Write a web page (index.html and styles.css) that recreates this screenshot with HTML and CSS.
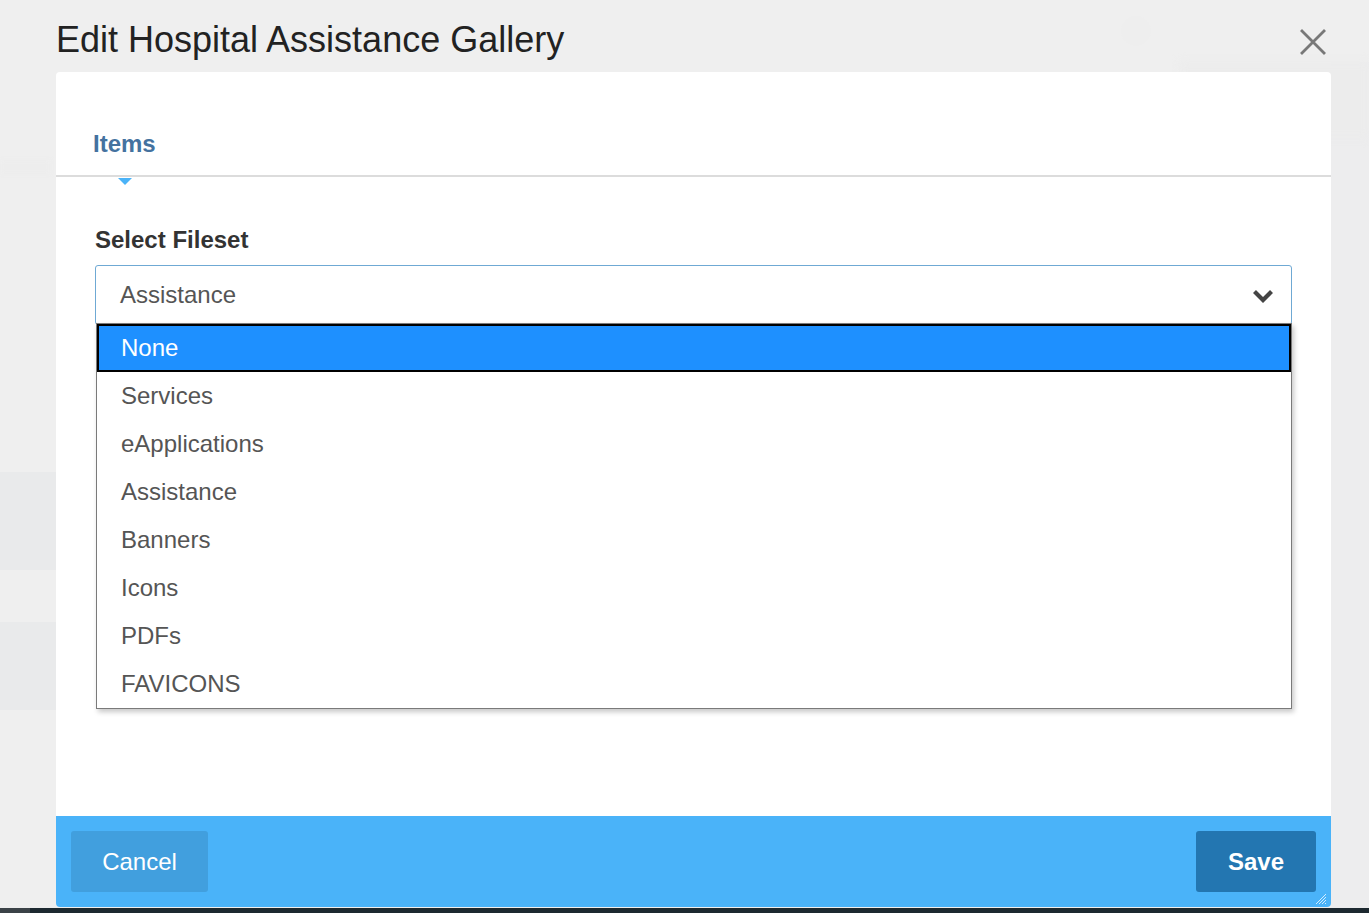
FILE: index.html
```html
<!DOCTYPE html>
<html lang="en">
<head>
<meta charset="utf-8">
<title>Edit Hospital Assistance Gallery</title>
<link rel="stylesheet" href="styles.css">
</head>
<body>
<div class="backdrop" aria-hidden="true">
  <div class="bd bd-right"></div>
  <div class="bd bd-right-top"></div>
  <div class="bd bd-left-1"></div>
  <div class="bd bd-left-2"></div>
  <div class="bd bd-left-3"></div>
  <div class="bd bd-circle"></div>
</div>
<div class="page">
  <header class="modal-head">
    <h1 class="modal-title">Edit Hospital Assistance Gallery</h1>
    <button class="close" aria-label="Close">
      <svg width="26" height="26" viewBox="0 0 26 26"><path d="M2 2 L24 24 M24 2 L2 24" stroke="#787878" stroke-width="2.8" fill="none" stroke-linecap="square"/></svg>
    </button>
  </header>
  <div class="dialog">
    <nav class="tabs">
      <span class="tab active">Items</span>
    </nav>
    <div class="dialog-body">
      <label class="field-label">Select Fileset</label>
      <div class="select-wrap">
        <div class="select">
          <span class="select-value">Assistance</span>
          <svg class="chevron" width="22" height="15" viewBox="0 0 22 15"><path d="M2.5 2.5 L11 11 L19.5 2.5" stroke="#444" stroke-width="4.2" fill="none"/></svg>
        </div>
        <ul class="options">
          <li class="option selected">None</li>
          <li class="option">Services</li>
          <li class="option">eApplications</li>
          <li class="option">Assistance</li>
          <li class="option">Banners</li>
          <li class="option">Icons</li>
          <li class="option">PDFs</li>
          <li class="option">FAVICONS</li>
        </ul>
      </div>
    </div>
    <footer class="dialog-foot">
      <button class="btn btn-cancel">Cancel</button>
      <button class="btn btn-save">Save</button>
      <svg class="grip" width="12" height="12" viewBox="0 0 12 12"><path d="M11 1 L1 11 M11 4 L4 11 M11 7 L7 11 M11 10 L10 11" stroke="rgba(255,255,255,0.75)" stroke-width="1" fill="none"/></svg>
    </footer>
  </div>
</div>
<div class="taskbar"><span class="taskbar-start"></span></div>
</body>
</html>
```
FILE: styles.css
```css
* { box-sizing: border-box; }
html, body { margin: 0; padding: 0; }
body {
  width: 1369px;
  height: 913px;
  overflow: hidden;
  background: #efefef;
  font-family: "Liberation Sans", Arial, sans-serif;
  position: relative;
  display: flex;
  flex-direction: column;
}
.backdrop { position: absolute; inset: 0; z-index: 0; }
.bd { position: absolute; }
.bd-right { left: 1331px; top: 62px; width: 38px; height: 846px; background: #ededee; }
.bd-right-top { left: 1180px; top: 62px; width: 189px; height: 76px; background: #ececec; filter: blur(4px); }
.bd-left-1 { left: 0; top: 472px; width: 56px; height: 98px; background: #e9eaeb; }
.bd-left-2 { left: 0; top: 622px; width: 56px; height: 88px; background: #e9eaeb; }
.bd-left-3 { left: 0; top: 160px; width: 50px; height: 14px; background: #ededed; filter: blur(2px); }
.bd-circle { left: 1121px; top: 16px; width: 30px; height: 30px; border-radius: 50%; background: #eeeeee; }

.page {
  position: relative;
  z-index: 1;
  height: 908px;
  padding: 0 38px 0 56px;
  display: flex;
  flex-direction: column;
}
.modal-head {
  height: 72px;
  display: flex;
  justify-content: space-between;
  align-items: flex-start;
}
.modal-title {
  margin: 0;
  padding-top: 22px;
  font-size: 36px;
  line-height: 36px;
  font-weight: normal;
  color: #222;
}
.close {
  margin: 29px 5px 0 0;
  padding: 0;
  border: 0;
  background: none;
  width: 26px;
  height: 26px;
  display: block;
}
.close svg { display: block; }

.dialog {
  height: 835px;
  background: #fff;
  border-radius: 4px;
  display: flex;
  flex-direction: column;
  position: relative;
}
.tabs {
  height: 105px;
  border-bottom: 2px solid #dcdcdc;
  padding-left: 37px;
  display: flex;
}
.tab {
  position: relative;
  padding-top: 60px;
  font-size: 24px;
  line-height: 24px;
  font-weight: bold;
  color: #44729f;
}
.tab.active::after {
  content: "";
  position: absolute;
  left: 25px;
  top: calc(100% + 3px);
  width: 0;
  height: 0;
  border-left: 7.5px solid transparent;
  border-right: 7.5px solid transparent;
  border-top: 7px solid #4ab3f8;
}
.dialog-body {
  padding: 51px 39px 0 39px;
}
.field-label {
  display: block;
  font-size: 24px;
  line-height: 24px;
  font-weight: bold;
  color: #333;
}
.select-wrap {
  position: relative;
  margin-top: 13px;
}
.select {
  height: 60px;
  border: 1px solid #6fa9d4;
  border-radius: 3px;
  padding: 0 17px 0 24px;
  display: flex;
  align-items: center;
  justify-content: space-between;
}
.select-value {
  font-size: 24px;
  color: #555;
}
.chevron { display: block; margin-top: 2px; }
.options {
  position: absolute;
  left: 1px;
  right: 0;
  top: 58px;
  margin: 0;
  padding: 0;
  list-style: none;
  background: #fff;
  border: 1px solid #7a7a7a;
  box-shadow: 2px 3px 5px rgba(0,0,0,0.22);
}
.option {
  height: 48px;
  padding-left: 24px;
  display: flex;
  align-items: center;
  font-size: 24px;
  color: #555;
}
.option.selected {
  background: #1e90ff;
  color: #fff;
  box-shadow: inset 0 0 0 2px #000;
}
.dialog-foot {
  margin-top: auto;
  height: 91px;
  background: #4ab3f9;
  border-radius: 0 0 4px 4px;
  padding: 15px;
  display: flex;
  justify-content: space-between;
  position: relative;
}
.btn {
  height: 61px;
  border: 0;
  border-radius: 3px;
  font-family: "Liberation Sans", Arial, sans-serif;
  font-size: 24px;
  color: #fff;
  padding: 0;
}
.btn-cancel { width: 137px; background: #419fde; }
.btn-save { width: 120px; background: #2376b1; font-weight: bold; }
.grip { position: absolute; right: 4px; bottom: 2px; }
.taskbar {
  position: relative;
  z-index: 1;
  height: 5px;
  background: #1d2930;
  display: flex;
}
.taskbar-start { width: 30px; background: #3b4247; }
```
